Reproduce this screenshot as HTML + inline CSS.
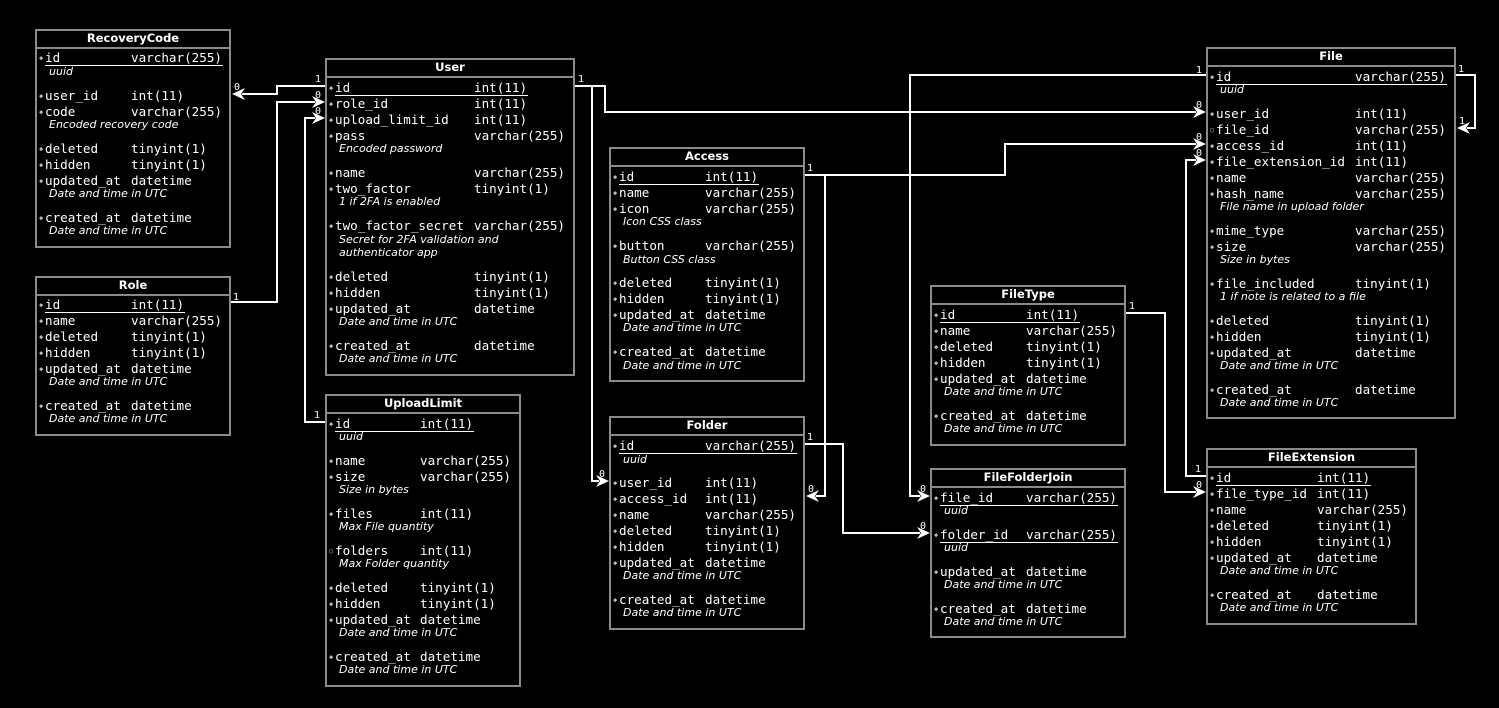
<!DOCTYPE html>
<html><head><meta charset="utf-8"><style>
body{margin:0;width:1499px;height:708px;background:#000;position:relative;overflow:hidden;font-family:"DejaVu Sans Mono","Liberation Mono",monospace;color:#fff}
.t{position:absolute;box-shadow:inset 0 0 0 2px #8a8a8a;background:#000}
.h{position:absolute;left:0;right:0;top:0;height:16px;padding-top:2px;line-height:18px;text-align:center;font:bold 11.5px "DejaVu Sans","Liberation Sans",sans-serif;border-bottom:2px solid #8a8a8a}
.r{position:absolute;left:0;right:0;height:16px;line-height:16px;font-size:12.6px;white-space:pre}
.r b{position:absolute;left:4px;top:0;font-weight:normal;font-size:7px;color:#bbb}
.r .n{position:absolute;left:10px}
.r .y{position:absolute}
.c{position:absolute;left:14px;height:13px;line-height:13px;font:italic 11px "DejaVu Sans","Liberation Sans",sans-serif;white-space:pre}
.u{position:absolute;height:1px;background:#fff}
svg{position:absolute;left:0;top:0}
</style></head><body>
<svg width="1499" height="708" fill="none" stroke="#fff" stroke-width="2">
<path d="M574 86H605V112H1196"/>
<path d="M592 86V481H599"/>
<path d="M325 86H277V94H242"/>
<path d="M230 302H277V102H315"/>
<path d="M325 422H305V118H315"/>
<path d="M804 175H1005V144H1196"/>
<path d="M825 175V496H816"/>
<path d="M804 444H843V533H920"/>
<path d="M1206 75H910V496H920"/>
<path d="M1455 75H1475V128H1467"/>
<path d="M1125 313H1165V492H1196"/>
<path d="M1206 476H1186V160H1196"/>
<g fill="#fff" stroke="none">
<polygon points="1206,112 1193,106 1197,112 1193,118"/>
<polygon points="609,481 596,475 600,481 596,487"/>
<polygon points="232,94 245,88 241,94 245,100"/>
<polygon points="325,102 312,96 316,102 312,108"/>
<polygon points="325,118 312,112 316,118 312,124"/>
<polygon points="1206,144 1193,138 1197,144 1193,150"/>
<polygon points="806,496 819,490 815,496 819,502"/>
<polygon points="930,533 917,527 921,533 917,539"/>
<polygon points="930,496 917,490 921,496 917,502"/>
<polygon points="1457,128 1470,122 1466,128 1470,134"/>
<polygon points="1206,492 1193,486 1197,492 1193,498"/>
<polygon points="1206,160 1193,154 1197,160 1193,166"/>
</g>
<g fill="#fff" stroke="none" font-family="DejaVu Sans Mono" font-size="10">
<text x="578" y="82">1</text><text x="1196" y="73">1</text><text x="1458" y="72">1</text><text x="1459" y="124">1</text>
<text x="315" y="82">1</text><text x="233" y="300">1</text><text x="314" y="418">1</text><text x="807" y="171">1</text>
<text x="807" y="440">1</text><text x="1129" y="309">1</text><text x="1195" y="472">1</text>
<text x="1196" y="108">0</text><text x="1196" y="140">0</text><text x="1196" y="156">0</text><text x="234" y="90">0</text>
<text x="315" y="98">0</text><text x="315" y="114">0</text><text x="599" y="477">0</text><text x="808" y="492">0</text>
<text x="920" y="492">0</text><text x="920" y="529">0</text><text x="1196" y="488">0</text>
</g>
</svg>

<div class="t" style="left:35px;top:29px;width:196px;height:219px">
<div class="h">RecoveryCode</div>
<div class="r" style="top:21px"><b>◆</b><span class="n">id</span><span class="y" style="left:96px">varchar(255)</span></div><div class="u" style="left:10px;width:178px;top:36px"></div>
<div class="c" style="top:36px">uuid</div>
<div class="r" style="top:59px"><b>◆</b><span class="n">user_id</span><span class="y" style="left:96px">int(11)</span></div>
<div class="r" style="top:75px"><b>◆</b><span class="n">code</span><span class="y" style="left:96px">varchar(255)</span></div>
<div class="c" style="top:89px">Encoded recovery code</div>
<div class="r" style="top:112px"><b>◆</b><span class="n">deleted</span><span class="y" style="left:96px">tinyint(1)</span></div>
<div class="r" style="top:128px"><b>◆</b><span class="n">hidden</span><span class="y" style="left:96px">tinyint(1)</span></div>
<div class="r" style="top:144px"><b>◆</b><span class="n">updated_at</span><span class="y" style="left:96px">datetime</span></div>
<div class="c" style="top:158px">Date and time in UTC</div>
<div class="r" style="top:181px"><b>◆</b><span class="n">created_at</span><span class="y" style="left:96px">datetime</span></div>
<div class="c" style="top:195px">Date and time in UTC</div>
</div>

<div class="t" style="left:35px;top:276px;width:196px;height:160px">
<div class="h">Role</div>
<div class="r" style="top:21px"><b>◆</b><span class="n">id</span><span class="y" style="left:96px">int(11)</span></div><div class="u" style="left:10px;width:140px;top:36px"></div>
<div class="r" style="top:37px"><b>◆</b><span class="n">name</span><span class="y" style="left:96px">varchar(255)</span></div>
<div class="r" style="top:53px"><b>◆</b><span class="n">deleted</span><span class="y" style="left:96px">tinyint(1)</span></div>
<div class="r" style="top:69px"><b>◆</b><span class="n">hidden</span><span class="y" style="left:96px">tinyint(1)</span></div>
<div class="r" style="top:85px"><b>◆</b><span class="n">updated_at</span><span class="y" style="left:96px">datetime</span></div>
<div class="c" style="top:99px">Date and time in UTC</div>
<div class="r" style="top:122px"><b>◆</b><span class="n">created_at</span><span class="y" style="left:96px">datetime</span></div>
<div class="c" style="top:136px">Date and time in UTC</div>
</div>

<div class="t" style="left:325px;top:58px;width:250px;height:318px">
<div class="h">User</div>
<div class="r" style="top:22px"><b>◆</b><span class="n">id</span><span class="y" style="left:149px">int(11)</span></div><div class="u" style="left:10px;width:193px;top:37px"></div>
<div class="r" style="top:38px"><b>◆</b><span class="n">role_id</span><span class="y" style="left:149px">int(11)</span></div>
<div class="r" style="top:54px"><b>◆</b><span class="n">upload_limit_id</span><span class="y" style="left:149px">int(11)</span></div>
<div class="r" style="top:70px"><b>◆</b><span class="n">pass</span><span class="y" style="left:149px">varchar(255)</span></div>
<div class="c" style="top:84px">Encoded password</div>
<div class="r" style="top:107px"><b>◆</b><span class="n">name</span><span class="y" style="left:149px">varchar(255)</span></div>
<div class="r" style="top:123px"><b>◆</b><span class="n">two_factor</span><span class="y" style="left:149px">tinyint(1)</span></div>
<div class="c" style="top:137px">1 if 2FA is enabled</div>
<div class="r" style="top:160px"><b>◆</b><span class="n">two_factor_secret</span><span class="y" style="left:149px">varchar(255)</span></div>
<div class="c" style="top:175px">Secret for 2FA validation and</div>
<div class="c" style="top:188px">authenticator app</div>
<div class="r" style="top:211px"><b>◆</b><span class="n">deleted</span><span class="y" style="left:149px">tinyint(1)</span></div>
<div class="r" style="top:227px"><b>◆</b><span class="n">hidden</span><span class="y" style="left:149px">tinyint(1)</span></div>
<div class="r" style="top:243px"><b>◆</b><span class="n">updated_at</span><span class="y" style="left:149px">datetime</span></div>
<div class="c" style="top:257px">Date and time in UTC</div>
<div class="r" style="top:280px"><b>◆</b><span class="n">created_at</span><span class="y" style="left:149px">datetime</span></div>
<div class="c" style="top:294px">Date and time in UTC</div>
</div>

<div class="t" style="left:325px;top:394px;width:196px;height:293px">
<div class="h">UploadLimit</div>
<div class="r" style="top:22px"><b>◆</b><span class="n">id</span><span class="y" style="left:95px">int(11)</span></div><div class="u" style="left:10px;width:139px;top:37px"></div>
<div class="c" style="top:36px">uuid</div>
<div class="r" style="top:59px"><b>◆</b><span class="n">name</span><span class="y" style="left:95px">varchar(255)</span></div>
<div class="r" style="top:75px"><b>◆</b><span class="n">size</span><span class="y" style="left:95px">varchar(255)</span></div>
<div class="c" style="top:89px">Size in bytes</div>
<div class="r" style="top:112px"><b>◆</b><span class="n">files</span><span class="y" style="left:95px">int(11)</span></div>
<div class="c" style="top:126px">Max File quantity</div>
<div class="r" style="top:149px"><b>○</b><span class="n">folders</span><span class="y" style="left:95px">int(11)</span></div>
<div class="c" style="top:163px">Max Folder quantity</div>
<div class="r" style="top:186px"><b>◆</b><span class="n">deleted</span><span class="y" style="left:95px">tinyint(1)</span></div>
<div class="r" style="top:202px"><b>◆</b><span class="n">hidden</span><span class="y" style="left:95px">tinyint(1)</span></div>
<div class="r" style="top:218px"><b>◆</b><span class="n">updated_at</span><span class="y" style="left:95px">datetime</span></div>
<div class="c" style="top:232px">Date and time in UTC</div>
<div class="r" style="top:255px"><b>◆</b><span class="n">created_at</span><span class="y" style="left:95px">datetime</span></div>
<div class="c" style="top:269px">Date and time in UTC</div>
</div>

<div class="t" style="left:609px;top:147px;width:196px;height:235px">
<div class="h">Access</div>
<div class="r" style="top:22px"><b>◆</b><span class="n">id</span><span class="y" style="left:96px">int(11)</span></div><div class="u" style="left:10px;width:140px;top:37px"></div>
<div class="r" style="top:38px"><b>◆</b><span class="n">name</span><span class="y" style="left:96px">varchar(255)</span></div>
<div class="r" style="top:54px"><b>◆</b><span class="n">icon</span><span class="y" style="left:96px">varchar(255)</span></div>
<div class="c" style="top:68px">Icon CSS class</div>
<div class="r" style="top:91px"><b>◆</b><span class="n">button</span><span class="y" style="left:96px">varchar(255)</span></div>
<div class="c" style="top:106px">Button CSS class</div>
<div class="r" style="top:128px"><b>◆</b><span class="n">deleted</span><span class="y" style="left:96px">tinyint(1)</span></div>
<div class="r" style="top:144px"><b>◆</b><span class="n">hidden</span><span class="y" style="left:96px">tinyint(1)</span></div>
<div class="r" style="top:160px"><b>◆</b><span class="n">updated_at</span><span class="y" style="left:96px">datetime</span></div>
<div class="c" style="top:174px">Date and time in UTC</div>
<div class="r" style="top:197px"><b>◆</b><span class="n">created_at</span><span class="y" style="left:96px">datetime</span></div>
<div class="c" style="top:212px">Date and time in UTC</div>
</div>

<div class="t" style="left:609px;top:416px;width:196px;height:214px">
<div class="h">Folder</div>
<div class="r" style="top:22px"><b>◆</b><span class="n">id</span><span class="y" style="left:96px">varchar(255)</span></div><div class="u" style="left:10px;width:178px;top:37px"></div>
<div class="c" style="top:37px">uuid</div>
<div class="r" style="top:59px"><b>◆</b><span class="n">user_id</span><span class="y" style="left:96px">int(11)</span></div>
<div class="r" style="top:75px"><b>◆</b><span class="n">access_id</span><span class="y" style="left:96px">int(11)</span></div>
<div class="r" style="top:91px"><b>◆</b><span class="n">name</span><span class="y" style="left:96px">varchar(255)</span></div>
<div class="r" style="top:107px"><b>◆</b><span class="n">deleted</span><span class="y" style="left:96px">tinyint(1)</span></div>
<div class="r" style="top:123px"><b>◆</b><span class="n">hidden</span><span class="y" style="left:96px">tinyint(1)</span></div>
<div class="r" style="top:139px"><b>◆</b><span class="n">updated_at</span><span class="y" style="left:96px">datetime</span></div>
<div class="c" style="top:153px">Date and time in UTC</div>
<div class="r" style="top:176px"><b>◆</b><span class="n">created_at</span><span class="y" style="left:96px">datetime</span></div>
<div class="c" style="top:190px">Date and time in UTC</div>
</div>

<div class="t" style="left:930px;top:285px;width:196px;height:161px">
<div class="h">FileType</div>
<div class="r" style="top:22px"><b>◆</b><span class="n">id</span><span class="y" style="left:96px">int(11)</span></div><div class="u" style="left:10px;width:140px;top:37px"></div>
<div class="r" style="top:38px"><b>◆</b><span class="n">name</span><span class="y" style="left:96px">varchar(255)</span></div>
<div class="r" style="top:54px"><b>◆</b><span class="n">deleted</span><span class="y" style="left:96px">tinyint(1)</span></div>
<div class="r" style="top:70px"><b>◆</b><span class="n">hidden</span><span class="y" style="left:96px">tinyint(1)</span></div>
<div class="r" style="top:86px"><b>◆</b><span class="n">updated_at</span><span class="y" style="left:96px">datetime</span></div>
<div class="c" style="top:100px">Date and time in UTC</div>
<div class="r" style="top:123px"><b>◆</b><span class="n">created_at</span><span class="y" style="left:96px">datetime</span></div>
<div class="c" style="top:137px">Date and time in UTC</div>
</div>

<div class="t" style="left:930px;top:468px;width:196px;height:170px">
<div class="h">FileFolderJoin</div>
<div class="r" style="top:22px"><b>◆</b><span class="n">file_id</span><span class="y" style="left:96px">varchar(255)</span></div><div class="u" style="left:10px;width:178px;top:37px"></div>
<div class="c" style="top:36px">uuid</div>
<div class="r" style="top:59px"><b>◆</b><span class="n">folder_id</span><span class="y" style="left:96px">varchar(255)</span></div><div class="u" style="left:10px;width:178px;top:74px"></div>
<div class="c" style="top:73px">uuid</div>
<div class="r" style="top:96px"><b>◆</b><span class="n">updated_at</span><span class="y" style="left:96px">datetime</span></div>
<div class="c" style="top:110px">Date and time in UTC</div>
<div class="r" style="top:133px"><b>◆</b><span class="n">created_at</span><span class="y" style="left:96px">datetime</span></div>
<div class="c" style="top:147px">Date and time in UTC</div>
</div>

<div class="t" style="left:1206px;top:47px;width:250px;height:372px">
<div class="h">File</div>
<div class="r" style="top:22px"><b>◆</b><span class="n">id</span><span class="y" style="left:149px">varchar(255)</span></div><div class="u" style="left:10px;width:231px;top:37px"></div>
<div class="c" style="top:36px">uuid</div>
<div class="r" style="top:59px"><b>◆</b><span class="n">user_id</span><span class="y" style="left:149px">int(11)</span></div>
<div class="r" style="top:75px"><b>○</b><span class="n">file_id</span><span class="y" style="left:149px">varchar(255)</span></div>
<div class="r" style="top:91px"><b>◆</b><span class="n">access_id</span><span class="y" style="left:149px">int(11)</span></div>
<div class="r" style="top:107px"><b>◆</b><span class="n">file_extension_id</span><span class="y" style="left:149px">int(11)</span></div>
<div class="r" style="top:123px"><b>◆</b><span class="n">name</span><span class="y" style="left:149px">varchar(255)</span></div>
<div class="r" style="top:139px"><b>◆</b><span class="n">hash_name</span><span class="y" style="left:149px">varchar(255)</span></div>
<div class="c" style="top:153px">File name in upload folder</div>
<div class="r" style="top:176px"><b>◆</b><span class="n">mime_type</span><span class="y" style="left:149px">varchar(255)</span></div>
<div class="r" style="top:192px"><b>◆</b><span class="n">size</span><span class="y" style="left:149px">varchar(255)</span></div>
<div class="c" style="top:206px">Size in bytes</div>
<div class="r" style="top:229px"><b>◆</b><span class="n">file_included</span><span class="y" style="left:149px">tinyint(1)</span></div>
<div class="c" style="top:243px">1 if note is related to a file</div>
<div class="r" style="top:266px"><b>◆</b><span class="n">deleted</span><span class="y" style="left:149px">tinyint(1)</span></div>
<div class="r" style="top:282px"><b>◆</b><span class="n">hidden</span><span class="y" style="left:149px">tinyint(1)</span></div>
<div class="r" style="top:298px"><b>◆</b><span class="n">updated_at</span><span class="y" style="left:149px">datetime</span></div>
<div class="c" style="top:312px">Date and time in UTC</div>
<div class="r" style="top:335px"><b>◆</b><span class="n">created_at</span><span class="y" style="left:149px">datetime</span></div>
<div class="c" style="top:349px">Date and time in UTC</div>
</div>

<div class="t" style="left:1206px;top:448px;width:211px;height:177px">
<div class="h">FileExtension</div>
<div class="r" style="top:22px"><b>◆</b><span class="n">id</span><span class="y" style="left:111px">int(11)</span></div><div class="u" style="left:10px;width:155px;top:37px"></div>
<div class="r" style="top:38px"><b>◆</b><span class="n">file_type_id</span><span class="y" style="left:111px">int(11)</span></div>
<div class="r" style="top:54px"><b>◆</b><span class="n">name</span><span class="y" style="left:111px">varchar(255)</span></div>
<div class="r" style="top:70px"><b>◆</b><span class="n">deleted</span><span class="y" style="left:111px">tinyint(1)</span></div>
<div class="r" style="top:86px"><b>◆</b><span class="n">hidden</span><span class="y" style="left:111px">tinyint(1)</span></div>
<div class="r" style="top:102px"><b>◆</b><span class="n">updated_at</span><span class="y" style="left:111px">datetime</span></div>
<div class="c" style="top:116px">Date and time in UTC</div>
<div class="r" style="top:139px"><b>◆</b><span class="n">created_at</span><span class="y" style="left:111px">datetime</span></div>
<div class="c" style="top:153px">Date and time in UTC</div>
</div>
</body></html>
